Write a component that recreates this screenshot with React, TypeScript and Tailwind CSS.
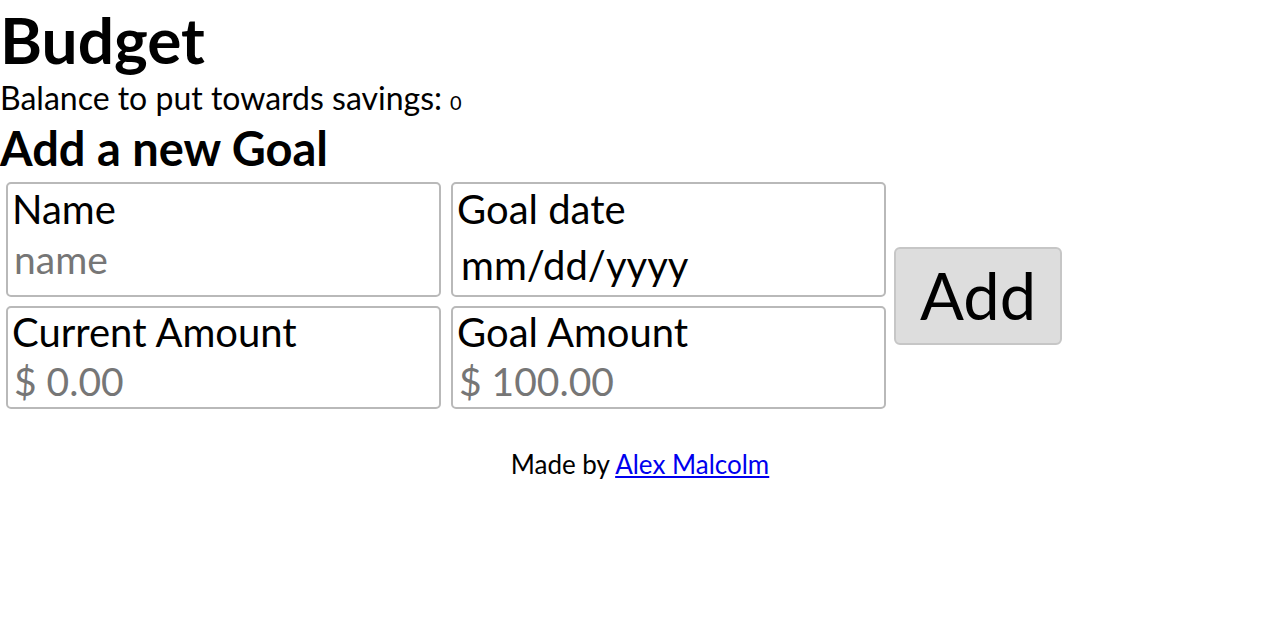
import React from 'react';

type FieldProps = { label: string; placeholder?: string; date?: boolean; top?: boolean };

const Field: React.FC<FieldProps> = ({ label, placeholder, date, top }) => (
  <label className={`flex flex-col border-2 border-[#b9b9b9] rounded-[5px] px-[4px] ${top ? 'pt-[1px]' : ''}`}>
    <span className="text-[40px] leading-[48px] text-black">{label}</span>
    {date ? (
      <span className="text-[40px] leading-[52px] mt-[6px] pl-[4px] text-black">mm/dd/yyyy</span>
    ) : (
      <input
        className={`text-[39px] ${top ? 'h-[52px]' : 'h-[51px]'} pl-[2px] outline-none text-black placeholder:text-[#767676] bg-transparent w-full`}
        placeholder={placeholder}
      />
    )}
  </label>
);

export default function App() {
  return (
    <div className="min-h-[640px] bg-white text-black" style={{ fontFamily: 'Lato, "Open Sans", sans-serif' }}>
      <h1 className="text-[64px] font-bold leading-[80px]">Budget</h1>
      <p className="text-[32px] leading-[35px] flex items-baseline">
        Balance to put towards savings:
        <span className="text-[20px] ml-[8px]">0</span>
      </p>
      <h2 className="text-[47px] font-bold leading-[56px]">Add a new Goal</h2>
      <form className="flex items-center pl-[6px] mt-[6px]">
        <div className="grid grid-cols-[435px_435px] grid-rows-[115px_103px] gap-x-[10px] gap-y-[9px]">
          <Field label="Name" placeholder="name" top />
          <Field label="Goal date" date top />
          <Field label="Current Amount" placeholder="$ 0.00" />
          <Field label="Goal Amount" placeholder="$ 100.00" />
        </div>
        <button
          type="button"
          className="ml-[8px] w-[168px] h-[98px] bg-[#dddddd] border-2 border-[#c6c6c6] rounded-[6px] text-[65px] leading-none text-black"
        >
          Add
        </button>
      </form>
      <p className="text-center text-[26px] leading-[31px] mt-[40px]">
        Made by <a href="#" className="text-[#0000ee] underline">Alex Malcolm</a>
      </p>
    </div>
  );
}
